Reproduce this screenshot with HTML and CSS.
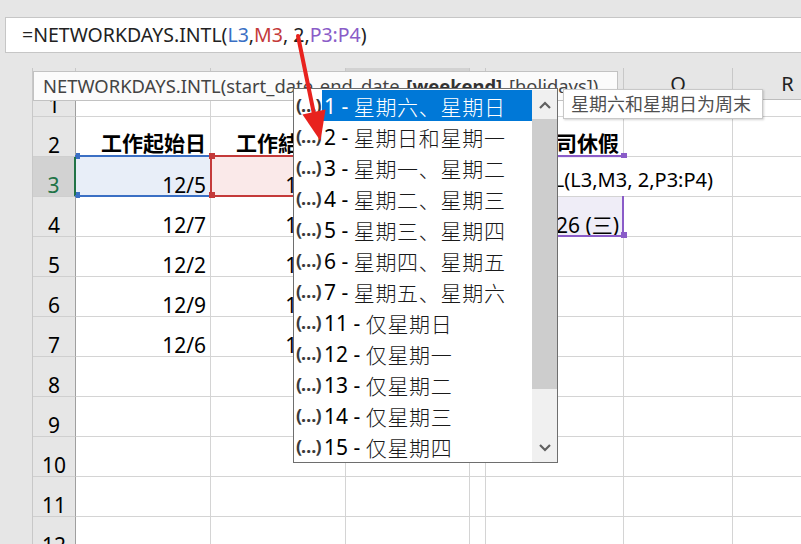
FILE: index.html
```html
<!DOCTYPE html>
<html lang="zh">
<head>
<meta charset="utf-8">
<link rel="stylesheet" href="styles.css">
</head>
<body>
<div class="app">
  <div class="fbar-area">
    <div class="fbar">=NETWORKDAYS.INTL(<span class="ref-b">L3</span>,<span class="ref-r">M3</span>, 2,<span class="ref-p">P3:P4</span>)</div>
  </div>

  <div class="sheet">
    <div class="row hdr">
      <div class="out"></div><div class="rh"></div>
      <div class="cL">L</div><div class="cM">M</div><div class="cN act">N</div><div class="cO">O</div><div class="cP">P</div><div class="cQ">Q</div><div class="cR">R</div>
    </div>
    <div class="row r1">
      <div class="out"></div><div class="rh">1</div>
      <div class="cL"></div><div class="cM"></div><div class="cN"></div><div class="cO"></div><div class="cP"></div><div class="cQ"></div><div class="cR"></div>
    </div>
    <div class="row">
      <div class="out"></div><div class="rh">2</div>
      <div class="cL th">工作起始日</div><div class="cM th">工作結束日</div><div class="cN th">工作日數</div><div class="cO"></div><div class="cP th">公司休假</div><div class="cQ"></div><div class="cR"></div>
    </div>
    <div class="row">
      <div class="out"></div><div class="rh act-row">3</div>
      <div class="cL rng-b">12/5<i class="hd hd-b hd-tl"></i><i class="hd hd-b hd-bl"></i></div>
      <div class="cM rng-r">12/16<i class="hd hd-r hd-tl"></i><i class="hd hd-r hd-bl"></i></div>
      <div class="cN"></div><div class="cO"></div>
      <div class="cP rng-p">2022/12/23 (五)<i class="hd hd-p hd-tr"></i></div>
      <div class="cQ"></div><div class="cR"></div>
    </div>
    <div class="row">
      <div class="out"></div><div class="rh">4</div>
      <div class="cL">12/7</div><div class="cM">12/20</div><div class="cN"></div><div class="cO"></div>
      <div class="cP rng-p2">2022/12/26 (三)<i class="hd hd-p hd-br"></i></div>
      <div class="cQ"></div><div class="cR"></div>
    </div>
    <div class="row">
      <div class="out"></div><div class="rh">5</div>
      <div class="cL">12/2</div><div class="cM">12/14</div><div class="cN"></div><div class="cO"></div><div class="cP"></div><div class="cQ"></div><div class="cR"></div>
    </div>
    <div class="row">
      <div class="out"></div><div class="rh">6</div>
      <div class="cL">12/9</div><div class="cM">12/21</div><div class="cN"></div><div class="cO"></div><div class="cP"></div><div class="cQ"></div><div class="cR"></div>
    </div>
    <div class="row">
      <div class="out"></div><div class="rh">7</div>
      <div class="cL">12/6</div><div class="cM">12/19</div><div class="cN"></div><div class="cO"></div><div class="cP"></div><div class="cQ"></div><div class="cR"></div>
    </div>
    <div class="row">
      <div class="out"></div><div class="rh">8</div>
      <div class="cL"></div><div class="cM"></div><div class="cN"></div><div class="cO"></div><div class="cP"></div><div class="cQ"></div><div class="cR"></div>
    </div>
    <div class="row">
      <div class="out"></div><div class="rh">9</div>
      <div class="cL"></div><div class="cM"></div><div class="cN"></div><div class="cO"></div><div class="cP"></div><div class="cQ"></div><div class="cR"></div>
    </div>
    <div class="row">
      <div class="out"></div><div class="rh">10</div>
      <div class="cL"></div><div class="cM"></div><div class="cN"></div><div class="cO"></div><div class="cP"></div><div class="cQ"></div><div class="cR"></div>
    </div>
    <div class="row">
      <div class="out"></div><div class="rh">11</div>
      <div class="cL"></div><div class="cM"></div><div class="cN"></div><div class="cO"></div><div class="cP"></div><div class="cQ"></div><div class="cR"></div>
    </div>
    <div class="row">
      <div class="out"></div><div class="rh">12</div>
      <div class="cL"></div><div class="cM"></div><div class="cN"></div><div class="cO"></div><div class="cP"></div><div class="cQ"></div><div class="cR"></div>
    </div>
  </div>

  <div class="hint">NETWORKDAYS.INTL(start_date, end_date, <b>[weekend]</b>, [holidays])</div>

  <div class="edit">=NETWORKDAYS.INTL(L3,M3, 2,P3:P4)</div>

  <div class="dd">
    <div class="dd-list">
      <div class="it sel"><span class="ic">(…)</span><span class="tx"><span class="n">1 - </span><span class="z">星期六、星期日</span></span></div>
      <div class="it"><span class="ic">(…)</span><span class="tx"><span class="n">2 - </span><span class="z">星期日和星期一</span></span></div>
      <div class="it"><span class="ic">(…)</span><span class="tx"><span class="n">3 - </span><span class="z">星期一、星期二</span></span></div>
      <div class="it"><span class="ic">(…)</span><span class="tx"><span class="n">4 - </span><span class="z">星期二、星期三</span></span></div>
      <div class="it"><span class="ic">(…)</span><span class="tx"><span class="n">5 - </span><span class="z">星期三、星期四</span></span></div>
      <div class="it"><span class="ic">(…)</span><span class="tx"><span class="n">6 - </span><span class="z">星期四、星期五</span></span></div>
      <div class="it"><span class="ic">(…)</span><span class="tx"><span class="n">7 - </span><span class="z">星期五、星期六</span></span></div>
      <div class="it"><span class="ic">(…)</span><span class="tx"><span class="n">11 - </span><span class="z">仅星期日</span></span></div>
      <div class="it"><span class="ic">(…)</span><span class="tx"><span class="n">12 - </span><span class="z">仅星期一</span></span></div>
      <div class="it"><span class="ic">(…)</span><span class="tx"><span class="n">13 - </span><span class="z">仅星期二</span></span></div>
      <div class="it"><span class="ic">(…)</span><span class="tx"><span class="n">14 - </span><span class="z">仅星期三</span></span></div>
      <div class="it"><span class="ic">(…)</span><span class="tx"><span class="n">15 - </span><span class="z">仅星期四</span></span></div>
    </div>
    <div class="sb">
      <div class="sb-btn"><svg width="12" height="8" viewBox="0 0 12 8"><path d="M1 7 L6 2 L11 7" fill="none" stroke="#606060" stroke-width="2.2"/></svg></div>
      <div class="sb-thumb"></div>
      <div class="sb-track"></div>
      <div class="sb-btn"><svg width="12" height="8" viewBox="0 0 12 8"><path d="M1 1 L6 6 L11 1" fill="none" stroke="#606060" stroke-width="2.2"/></svg></div>
    </div>
  </div>

  <div class="tip">星期六和星期日为周末</div>

  <svg class="arrow" width="801" height="544" viewBox="0 0 801 544">
    <line x1="298" y1="36" x2="314" y2="114" stroke="#e8221e" stroke-width="4" stroke-linecap="round"/>
    <polygon points="320.5,141 302.5,114.5 325.5,109.5" fill="#e8221e"/>
  </svg>
</div>
</body>
</html>
```

FILE: styles.css
```css
* { box-sizing: border-box; }
html, body { margin: 0; padding: 0; }
body {
  width: 801px;
  height: 544px;
  overflow: hidden;
  background: #e6e6e6;
  font-family: "Noto Sans", "Noto Sans CJK TC", sans-serif;
  color: #000;
}
.app {
  position: relative;
  width: 801px;
  height: 544px;
  overflow: hidden;
}

/* formula bar */
.fbar-area {
  height: 68px;
  padding: 17px 0 0 5px;
  background: #e6e6e6;
}
.fbar {
  height: 36px;
  background: #fff;
  border: 1px solid #c6c6c6;
  border-right: none;
  padding-left: 16px;
  font-size: 19.5px;
  line-height: 34px;
  color: #222;
  white-space: nowrap;
}
.ref-b { color: #3a6fc4; }
.ref-r { color: #c43a3a; }
.ref-p { color: #8a5cc8; }

/* sheet grid */
.sheet { display: flex; flex-direction: column; }
.row { display: flex; height: 40px; }
.row > div {
  flex: none;
  position: relative;
  background: #fff;
  border-right: 1px solid #d4d4d4;
  border-bottom: 1px solid #d4d4d4;
  display: flex;
  align-items: flex-end;
  justify-content: flex-end;
  padding: 0 4px 0 2px;
  font-size: 21px;
  line-height: 22px;
  white-space: nowrap;
  overflow: hidden;
}
.row > .out {
  width: 33px;
  background: #e6e6e6;
  border-right: 1px solid #c8c8c8;
  border-bottom: none;
}
.row > .rh {
  width: 43px;
  background: #e6e6e6;
  justify-content: center;
  padding: 0;
  border-right: 1px solid #9f9f9f;
  border-bottom: 1px solid #cfcfcf;
}
.row > .rh.act-row {
  background: #d2d2d2;
  color: #217346;
  border-right: 2px solid #217346;
}
.cL { width: 135px; }
.cM { width: 135px; }
.cN { width: 124px; }
.cO { width: 16px; }
.cP { width: 138px; }
.cQ { width: 109px; }
.cR { width: 110px; }

.row.hdr { height: 32px; }
.row.hdr > div {
  background: #e6e6e6;
  border-right-color: #c8c8c8;
  border-bottom-color: #bdbdbd;
  justify-content: center;
  align-items: center;
  padding: 0;
  font-size: 20px;
  color: #222;
}
.row.hdr > .out { border-bottom: none; }
.row.hdr > .act { background: #d2d2d2; }
.row.r1 { height: 17px; }
.row.r1 > .rh { align-items: flex-start; line-height: 10px; }

.row > .th { font-weight: 700; font-family: "Noto Sans CJK TC", sans-serif; padding-bottom: 3px; }

/* range highlights */
.row > .rng-b { background: #e8eef8; overflow: visible; }
.rng-b::after {
  content: "";
  position: absolute;
  left: -1px; right: -1px; top: -2px; bottom: -1px;
  border-top: 2px solid #3a6fc4;
  border-bottom: 2px solid #3a6fc4;
}
.row > .rng-r { background: #fae9e9; overflow: visible; }
.rng-r::after {
  content: "";
  position: absolute;
  left: -1px; right: -1px; top: -2px; bottom: -1px;
  border: 2px solid #c43a3a;
}
.row > .rng-p { background: #efedf7; overflow: visible; }
.row > .rng-p2 { background: #efedf7; overflow: visible; }
.rng-p::after {
  content: "";
  position: absolute;
  left: -1px; right: -1px; top: -2px; bottom: -41px;
  border: 2px solid #8a5cc8;
  z-index: 1;
}
.hd {
  position: absolute;
  width: 6px;
  height: 6px;
  z-index: 2;
}
.hd-b { background: #3a6fc4; }
.hd-r { background: #c43a3a; }
.hd-p { background: #8a5cc8; }
.hd-tl { left: -2px; top: -4px; }
.hd-bl { left: -2px; bottom: -2px; }
.hd-tr { right: -4px; top: -4px; }
.hd-br { right: -4px; bottom: -2px; }
.hd-b.hd-tl, .hd-b.hd-bl { left: 0; width: 4px; }

/* function hint */
.hint {
  position: absolute;
  z-index: 5;
  left: 33px;
  top: 71px;
  width: 585px;
  height: 30px;
  background: #fbfbfb;
  border: 1px solid #c2c2c2;
  padding-left: 9px;
  font-size: 18.4px;
  word-spacing: -3px;
  line-height: 27px;
  color: #444;
  white-space: nowrap;
  overflow: hidden;
}
.hint b { color: #333; }

/* in-cell editor */
.edit {
  position: absolute;
  z-index: 5;
  left: 346px;
  top: 158px;
  width: 371px;
  height: 38px;
  background: #fff;
  display: flex;
  align-items: flex-end;
  justify-content: flex-end;
  padding: 0 4px 5px 0;
  font-size: 20px;
  line-height: 22px;
  white-space: nowrap;
  overflow: hidden;
}

/* dropdown list */
.dd {
  position: absolute;
  z-index: 6;
  left: 293px;
  top: 88px;
  width: 265px;
  height: 375px;
  background: #fff;
  border: 1px solid #6e6e6e;
  padding-top: 1px;
  display: flex;
}
.dd-list { flex: 1; display: flex; flex-direction: column; }
.it { height: 31px; display: flex; align-items: center; white-space: nowrap; }
.ic {
  width: 28px;
  flex: none;
  padding-left: 2px;
  font-size: 18px;
  font-weight: 700;
  color: #3a3a3a;
  letter-spacing: -1px;
  line-height: 31px;
}
.tx {
  flex: 1;
  height: 31px;
  display: flex;
  align-items: center;
  padding-left: 2px;
  font-size: 21px;
  color: #000;
}
.n { white-space: pre; }
.z { font-family: "Noto Sans CJK SC", sans-serif; font-weight: 300; letter-spacing: 0.7px; color: #1a1a1a; }
.it.sel .tx { background: #0078d7; color: #fff; }
.it.sel .z { color: #fff; }

.sb { width: 25px; flex: none; display: flex; flex-direction: column; background: #f0f0f0; }
.sb-btn { height: 29px; display: flex; align-items: center; justify-content: center; }
.sb-thumb { height: 270px; background: #cdcdcd; }
.sb-track { flex: 1; }

/* value tooltip */
.tip {
  position: absolute;
  z-index: 7;
  left: 563px;
  top: 89px;
  width: 200px;
  height: 30px;
  background: #fff;
  border: 1px solid #c8c8c8;
  box-shadow: 1px 1px 2px rgba(0, 0, 0, 0.18);
  padding-left: 7px;
  font-family: "Noto Sans CJK SC", sans-serif;
  font-size: 18px;
  line-height: 27px;
  color: #505050;
  white-space: nowrap;
}

.arrow {
  position: absolute;
  z-index: 8;
  left: 0;
  top: 0;
  pointer-events: none;
}
```
